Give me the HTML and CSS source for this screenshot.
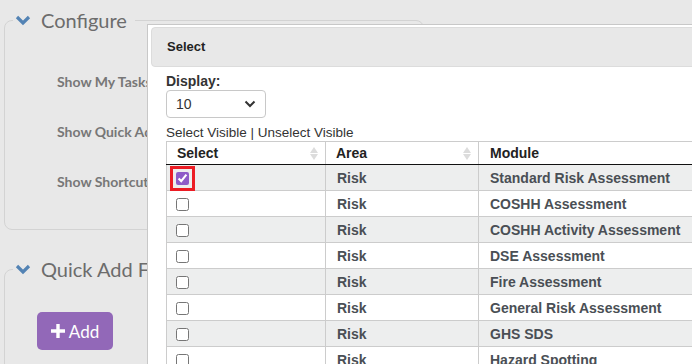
FILE: index.html
```html
<!DOCTYPE html>
<html lang="en">
<head>
    <meta charset="UTF-8">
    <meta name="viewport" content="width=device-width, initial-scale=1.0">
    <title>Configure</title>
    <link rel="stylesheet" href="styles.css">
</head>
<body>
    <!-- Configure -->
    <fieldset class="panel panel-configure">
        <legend>
            <svg class="chevron" width="16" height="12" viewBox="0 0 16 12"><polyline points="2,3 8,9 14,3" fill="none" stroke="#5383b4" stroke-width="3.2"/></svg>
            Configure
        </legend>
        <div class="option">Show My Tasks</div>
        <div class="option">Show Quick Add Forms</div>
        <div class="option">Show Shortcuts</div>
    </fieldset>

    <!-- Quick Add Forms -->
    <fieldset class="panel panel-quick">
        <legend>
            <svg class="chevron" width="16" height="12" viewBox="0 0 16 12"><polyline points="2,3 8,9 14,3" fill="none" stroke="#5383b4" stroke-width="3.2"/></svg>
            Quick Add Forms
        </legend>
        <button class="add-btn">
            <svg width="14" height="14" viewBox="0 0 14 14"><path d="M5.3 0h3.4v5.3H14v3.4H8.7V14H5.3V8.7H0V5.3h5.3z" fill="#fff"/></svg>
            Add
        </button>
    </fieldset>

    <!-- Select dialog -->
    <div class="modal">
        <div class="modal-header">Select</div>
        <div class="modal-body">
            <label class="display-label">Display:</label>
            <div class="display-select">
                <span>10</span>
                <svg width="12" height="8" viewBox="0 0 12 8"><polyline points="1.5,1.5 6,6 10.5,1.5" fill="none" stroke="#333" stroke-width="2"/></svg>
            </div>
            <div class="visible-links">Select Visible | Unselect Visible</div>
            <table class="grid">
                <colgroup>
                    <col style="width: 159px">
                    <col style="width: 153px">
                    <col style="width: 320px">
                </colgroup>
                <thead>
                    <tr>
                        <th><div class="th-inner">Select <span class="sort"></span></div></th>
                        <th><div class="th-inner">Area <span class="sort"></span></div></th>
                        <th class="col-module"><div class="th-inner">Module</div></th>
                    </tr>
                </thead>
                <tbody>
                    <tr><td><input type="checkbox" class="focused" checked></td><td>Risk</td><td>Standard Risk Assessment</td></tr>
                    <tr><td><input type="checkbox"></td><td>Risk</td><td>COSHH Assessment</td></tr>
                    <tr><td><input type="checkbox"></td><td>Risk</td><td>COSHH Activity Assessment</td></tr>
                    <tr><td><input type="checkbox"></td><td>Risk</td><td>DSE Assessment</td></tr>
                    <tr><td><input type="checkbox"></td><td>Risk</td><td>Fire Assessment</td></tr>
                    <tr><td><input type="checkbox"></td><td>Risk</td><td>General Risk Assessment</td></tr>
                    <tr><td><input type="checkbox"></td><td>Risk</td><td>GHS SDS</td></tr>
                    <tr><td><input type="checkbox"></td><td>Risk</td><td>Hazard Spotting</td></tr>
                </tbody>
            </table>
        </div>
    </div>
</body>
</html>
```

FILE: styles.css
```css
body {
    margin: 0;
    padding-top: 8px;
    background-color: #e8e8e8;
    font-family: Lato, "Open Sans", sans-serif;
    overflow: hidden;
    height: 364px;
    position: relative;
}
.panel {
    margin: 0 0 0 4px;
    width: 420px;
    border: 1px solid #d3d3d3;
    border-radius: 8px;
    padding: 0 8px;
    box-sizing: border-box;
}
.panel legend {
    font-size: 20px;
    line-height: 24px;
    color: #6c6c6c;
    padding: 0 8px 0 2px;
    display: flex;
    align-items: center;
    gap: 10px;
}
.panel-configure {
    padding-top: 25px;
    padding-bottom: 22px;
}
.option {
    height: 50px;
    line-height: 50px;
    padding-left: 44px;
    font-size: 14px;
    font-weight: bold;
    color: #777;
}
.panel-quick {
    margin-top: 27px;
    padding-top: 31px;
    height: 140px;
}
.add-btn {
    margin-left: 24px;
    width: 76px;
    height: 38px;
    background-color: #9268b8;
    border: none;
    border-radius: 5px;
    color: white;
    font-family: Lato, sans-serif;
    font-size: 17px;
    display: flex;
    align-items: center;
    justify-content: center;
    gap: 4px;
    padding: 0;
}
.modal {
    position: absolute;
    left: 147px;
    top: 24px;
    width: 800px;
    height: 400px;
    background-color: white;
    border: 1px solid #c8c8c8;
    padding: 2px 3px;
    font-family: "Liberation Sans", Arial, sans-serif;
    color: #333;
}
.modal-header {
    height: 38px;
    line-height: 38px;
    background-color: #e8e8e8;
    border: 1px solid #dcdcdc;
    border-radius: 4px;
    padding-left: 15px;
    font-size: 13px;
    font-weight: bold;
    color: #222;
}
.modal-body {
    padding: 6px 0 0 15px;
}
.display-label {
    display: block;
    font-size: 14px;
    font-weight: bold;
    line-height: 16px;
    color: #333;
}
.display-select {
    margin-top: 1px;
    width: 100px;
    height: 28px;
    box-sizing: border-box;
    border: 1px solid #c8c8c8;
    border-radius: 4px;
    display: flex;
    align-items: center;
    justify-content: space-between;
    padding: 0 9px;
    font-size: 14px;
    color: #333;
}
.visible-links {
    margin-top: 7px;
    font-size: 13.5px;
    line-height: 16px;
    color: #333;
}
.grid {
    border-collapse: collapse;
    table-layout: fixed;
    width: 632px;
    font-size: 14px;
}
.grid th {
    height: 22px;
    padding: 0 6px 0 10px;
    text-align: left;
    border: 1px solid #cccccc;
    border-bottom: 1px solid #111;
    color: #222;
}
.th-inner {
    display: flex;
    align-items: center;
    justify-content: space-between;
}
.sort {
    width: 9px;
    height: 15px;
    position: relative;
}
.sort::before, .sort::after {
    content: "";
    position: absolute;
    left: 0;
    border-left: 4.5px solid transparent;
    border-right: 4.5px solid transparent;
}
.sort::before {
    top: 1px;
    border-bottom: 6px solid #dcdcdc;
}
.sort::after {
    bottom: 1px;
    border-top: 6px solid #dcdcdc;
}
.grid th.col-module {
    padding-left: 11px;
}
.grid td {
    height: 25px;
    padding: 0 10px 0 11px;
    border: 1px solid #cccccc;
    font-weight: bold;
    color: #4a4f55;
    white-space: nowrap;
}
.grid td:first-child {
    padding-left: 9px;
}
.grid tbody tr:nth-child(odd) {
    background-color: #edeeee;
}
.grid input {
    margin: 0;
    width: 13px;
    height: 13px;
    vertical-align: middle;
    accent-color: #8e5cc8;
}
.grid input.focused {
    outline: 3px solid #ec1c24;
    outline-offset: 3px;
}
```
